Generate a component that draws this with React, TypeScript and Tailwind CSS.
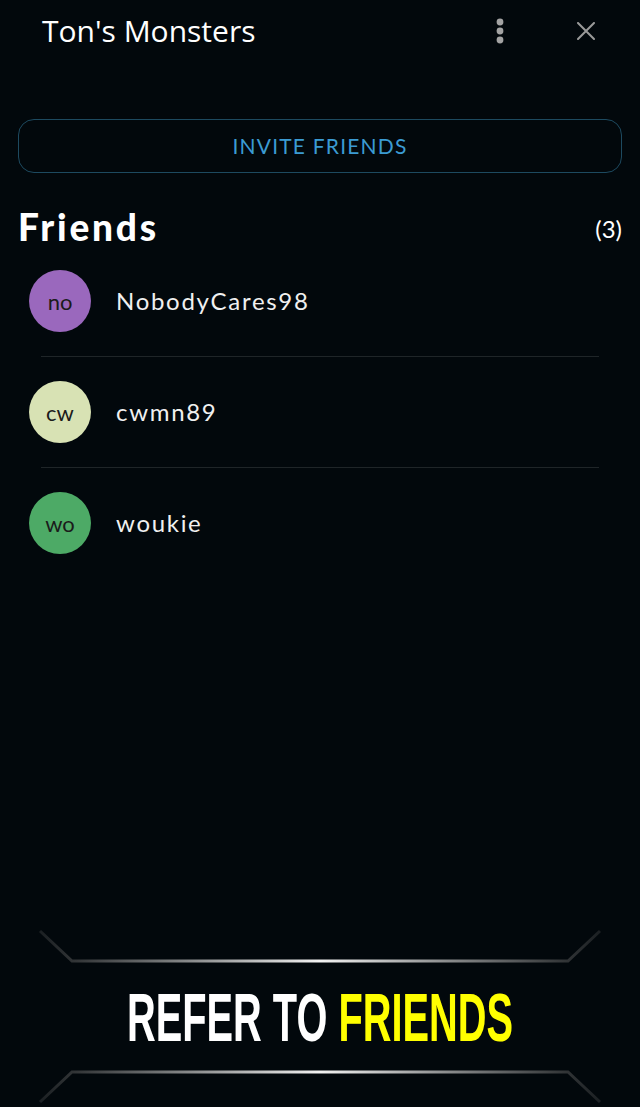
import React from "react";

const friends = [
  { initials: "no", name: "NobodyCares98", bg: "bg-[#9a68bd]" },
  { initials: "cw", name: "cwmn89", bg: "bg-[#d8e2b4]" },
  { initials: "wo", name: "woukie", bg: "bg-[#4daa66]" },
];

function Decor({ flip }: { flip?: boolean }) {
  const id = flip ? "g2" : "g1";
  return (
    <svg width="640" height="36" viewBox="0 0 640 36" className="block">
      <defs>
        <linearGradient id={id} x1="0" y1="0" x2="640" y2="0" gradientUnits="userSpaceOnUse">
          <stop offset="0" stopColor="#02080c" />
          <stop offset="0.12" stopColor="#333638" />
          <stop offset="0.3" stopColor="#8a8c8d" />
          <stop offset="0.5" stopColor="#f2f2f2" />
          <stop offset="0.7" stopColor="#8a8c8d" />
          <stop offset="0.88" stopColor="#333638" />
          <stop offset="1" stopColor="#02080c" />
        </linearGradient>
      </defs>
      {flip ? (
        <polyline
          points="40,34 72,4 568,4 600,34"
          fill="none"
          stroke={`url(#${id})`}
          strokeWidth="3"
        />
      ) : (
        <polyline
          points="40,2 72,32 568,32 600,2"
          fill="none"
          stroke={`url(#${id})`}
          strokeWidth="3"
        />
      )}
    </svg>
  );
}

export default function App() {
  return (
    <div className="h-[1107px] w-[640px] bg-[#02080c] flex flex-col overflow-hidden text-white">
      {/* Header */}
      <div className="h-[62px] flex items-center pl-[42px] pr-[45px]">
        <div className="flex-1 text-[30px] font-medium leading-none text-white [font-family:'Open_Sans','Noto_Sans',sans-serif]">
          Ton's Monsters
        </div>
        <svg width="10" height="26" viewBox="0 0 10 26" className="mr-[72px]">
          <circle cx="5" cy="4" r="3.4" fill="#a3a3a3" />
          <circle cx="5" cy="13" r="3.4" fill="#a3a3a3" />
          <circle cx="5" cy="22" r="3.4" fill="#a3a3a3" />
        </svg>
        <svg width="18" height="18" viewBox="0 0 18 18">
          <path d="M1 1L17 17M17 1L1 17" stroke="#9a9a9a" strokeWidth="2" strokeLinecap="round" />
        </svg>
      </div>

      {/* Invite button */}
      <div className="px-[18px] mt-[57px]">
        <div className="h-[54px] rounded-[16px] border border-[#1d4a60] flex items-center justify-center text-[#3b9bd3] text-[21px] tracking-[1.2px] [font-family:'Lato',sans-serif]">
          INVITE FRIENDS
        </div>
      </div>

      {/* Friends heading */}
      <div className="flex items-end justify-between px-[18px] mt-[30px] h-[43px]">
        <div className="text-[37px] font-black leading-none tracking-[2.8px] [font-family:'Lato',sans-serif] pb-[1px]">
          Friends
        </div>
        <div className="text-[24px] leading-none [font-family:'Lato',sans-serif] pb-[5px]">
          (3)
        </div>
      </div>

      {/* List */}
      <div className="flex flex-col">
        {friends.map((f, i) => (
          <div key={f.name} className="flex flex-col">
            {i > 0 && <div className="mx-[41px] h-px bg-[#1f2528]" />}
            <div className="h-[110px] flex items-center pl-[29px]">
              <div
                className={`w-[62px] h-[62px] rounded-full ${f.bg} flex items-center justify-center text-[#1b1b1b] text-[22px] [font-family:'Lato',sans-serif]`}
              >
                {f.initials}
              </div>
              <div className="ml-[25px] text-[24px] text-[#f0f0f0] tracking-[1.7px] [font-family:'Lato',sans-serif]">
                {f.name}
              </div>
            </div>
          </div>
        ))}
      </div>

      <div className="flex-1" />

      {/* Bottom banner */}
      <div className="flex flex-col items-center pb-[3px]">
        <Decor />
        <div className="w-full h-[103px] flex items-center justify-center overflow-hidden">
          <div className="scale-x-[0.585] whitespace-nowrap text-[68px] font-bold leading-none [font-family:'Liberation_Sans',Arial,sans-serif]">
            <span className="text-white">REFER TO </span>
            <span className="text-[#ffff00]">FRIENDS</span>
          </div>
        </div>
        <Decor flip />
      </div>
    </div>
  );
}
